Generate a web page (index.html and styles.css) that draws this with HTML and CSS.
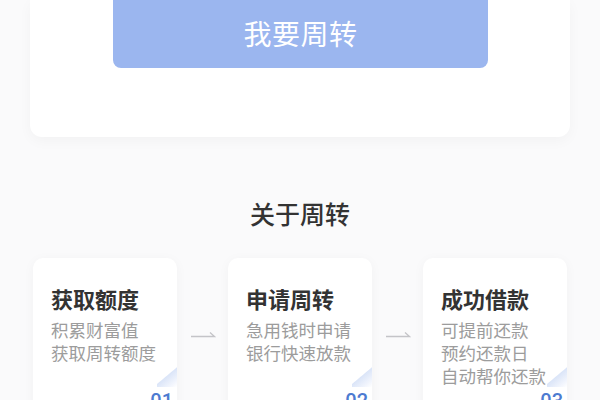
FILE: index.html
```html
<!DOCTYPE html>
<html>
<head>
    <title>关于周转</title>
    <meta charset="utf-8">
    <link rel="stylesheet" href="styles.css">
</head>
<body>
    <div class="apply">
        <div class="apply-btn">我要周转</div>
    </div>

    <h2 class="section-title">关于周转</h2>

    <div class="steps">
        <div class="step">
            <div class="step-title">获取额度</div>
            <div class="step-desc">积累财富值<br>获取周转额度</div>
            <div class="step-num">01</div>
        </div>
        <div class="arrow">
            <svg width="26" height="10" viewBox="0 0 26 10"><path d="M1 8.5H24.5L20 4.5" fill="none" stroke="#c4c4c8" stroke-width="1.3"/></svg>
        </div>
        <div class="step">
            <div class="step-title">申请周转</div>
            <div class="step-desc">急用钱时申请<br>银行快速放款</div>
            <div class="step-num">02</div>
        </div>
        <div class="arrow">
            <svg width="26" height="10" viewBox="0 0 26 10"><path d="M1 8.5H24.5L20 4.5" fill="none" stroke="#c4c4c8" stroke-width="1.3"/></svg>
        </div>
        <div class="step">
            <div class="step-title">成功借款</div>
            <div class="step-desc">可提前还款<br>预约还款日<br>自动帮你还款</div>
            <div class="step-num">03</div>
        </div>
    </div>
</body>
</html>
```

FILE: styles.css
```css
body {
    font-family: "Noto Sans CJK SC", "Noto Sans", sans-serif;
    background-color: #fafafb;
    margin: 0;
    padding: 0;
    overflow: hidden;
}

.apply {
    margin: 0 30px;
    padding: 0 82px 69px 83px;
    background-color: white;
    border-radius: 0 0 12px 12px;
    box-shadow: 0 4px 14px rgba(0, 0, 0, 0.035);
}

.apply-btn {
    height: 68px;
    background-color: #9bb6ef;
    border-radius: 0 0 8px 8px;
    color: white;
    font-size: 28px;
    line-height: 66px;
    text-align: center;
    letter-spacing: 0.5px;
}

.section-title {
    margin: 59px 0 0;
    font-size: 25px;
    font-weight: 500;
    line-height: 34px;
    color: #333;
    text-align: center;
}

.steps {
    display: flex;
    margin: 28px 0 0 33px;
}

.step {
    position: relative;
    width: 144px;
    height: 162px;
    box-sizing: border-box;
    padding: 25px 0 9px 18px;
    background-color: white;
    border-radius: 10px;
    box-shadow: 0 2px 12px rgba(0, 0, 0, 0.04);
    display: flex;
    flex-direction: column;
    overflow: hidden;
}

.step::after {
    content: "";
    position: absolute;
    right: 0;
    top: 105px;
    width: 20px;
    height: 24px;
    background: linear-gradient(140deg, transparent 50%, #dbe5f8 53%, #f3f6fd 85%, #ffffff);
}

.step-title {
    font-size: 22px;
    font-weight: 700;
    line-height: 30px;
    color: #333;
}

.step-desc {
    margin-top: 5px;
    font-size: 17.5px;
    line-height: 23px;
    color: #9c9c9c;
}

.step-num {
    margin-top: auto;
    align-self: flex-end;
    padding-right: 4px;
    font-family: "Roboto", sans-serif;
    font-size: 20px;
    font-weight: 500;
    line-height: 20px;
    color: #4d7bd1;
}

.arrow {
    width: 51px;
    display: flex;
    justify-content: center;
    padding-top: 70px;
}

.arrow svg {
    display: block;
}
```
